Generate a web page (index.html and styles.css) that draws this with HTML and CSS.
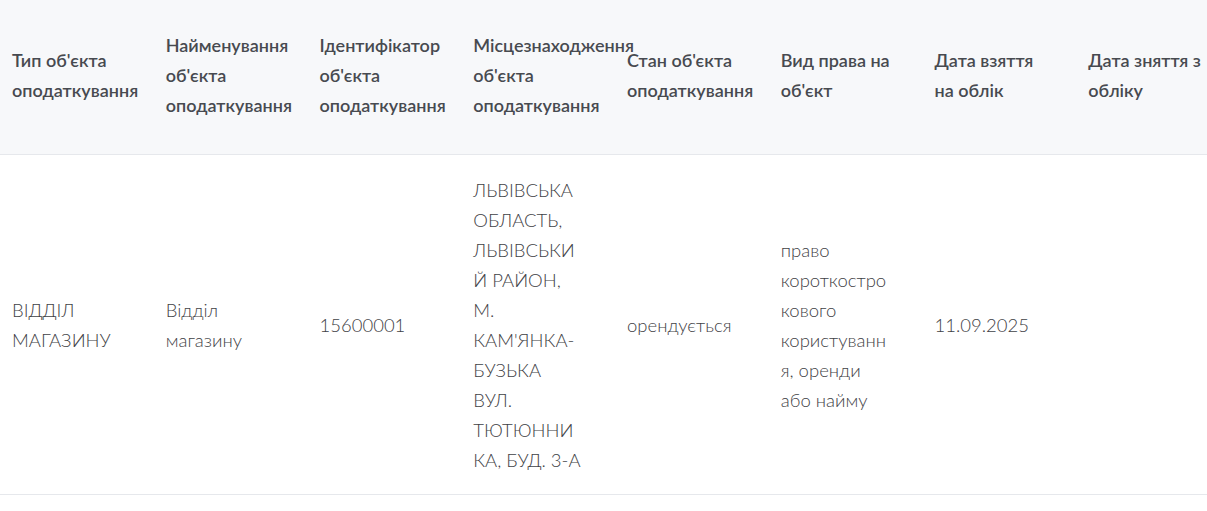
FILE: index.html
```html
<!DOCTYPE html>
<html lang="uk">
<head>
<meta charset="utf-8">
<link rel="stylesheet" href="styles.css">
</head>
<body>
<div class="wrap">
<table class="objects">
<colgroup>
<col class="c"><col class="c"><col class="c"><col class="c"><col class="c"><col class="c"><col class="c"><col class="c">
</colgroup>
<thead>
<tr>
<th>Тип об'єкта оподаткування</th>
<th>Найменування об'єкта оподаткування</th>
<th>Ідентифікатор об'єкта оподаткування</th>
<th>Місцезнаходження об'єкта оподаткування</th>
<th>Стан об'єкта оподаткування</th>
<th>Вид права на об'єкт</th>
<th>Дата взяття на облік</th>
<th>Дата зняття з обліку</th>
</tr>
</thead>
<tbody>
<tr>
<td>ВІДДІЛ МАГАЗИНУ</td>
<td>Відділ магазину</td>
<td>15600001</td>
<td class="addr">ЛЬВІВСЬКА<br>ОБЛАСТЬ,<br>ЛЬВІВСЬКИ<br>Й РАЙОН,<br>М.<br>КАМ'ЯНКА-<br>БУЗЬКА<br>ВУЛ.<br>ТЮТЮННИ<br>КА, БУД. 3-А</td>
<td>орендується</td>
<td>право короткострокового користування, оренди або найму</td>
<td>11.09.2025</td>
<td></td>
</tr>
</tbody>
</table>
</div>
</body>
</html>
```

FILE: styles.css
```css
html, body {
  margin: 0;
  padding: 0;
  background: #ffffff;
}
body {
  font-family: Lato, "Open Sans", "Noto Sans", sans-serif;
  color: #404347;
}
.wrap {
  width: 1207px;
  overflow: hidden;
}
.objects {
  width: 1230px;
  table-layout: fixed;
  border-collapse: collapse;
}
.objects .c {
  width: 153.75px;
}
.objects th {
  background: #f7f8fa;
  text-align: left;
  vertical-align: middle;
  font-weight: 600;
  font-size: 18px;
  line-height: 30px;
  color: #474a50;
  padding: 30px 22px 34px 12px;
  border-bottom: 1px solid #e6e8ec;
  white-space: normal;
  overflow: visible;
}
.objects td {
  vertical-align: middle;
  font-size: 18.5px;
  font-weight: 300;
  line-height: 30px;
  padding: 20px 33px 19px 12px;
  border-bottom: 1px solid #e6e8ec;
  overflow-wrap: anywhere;
  color: #3f4246;
}
.objects td.addr {
  white-space: nowrap;
  overflow: visible;
}
```
